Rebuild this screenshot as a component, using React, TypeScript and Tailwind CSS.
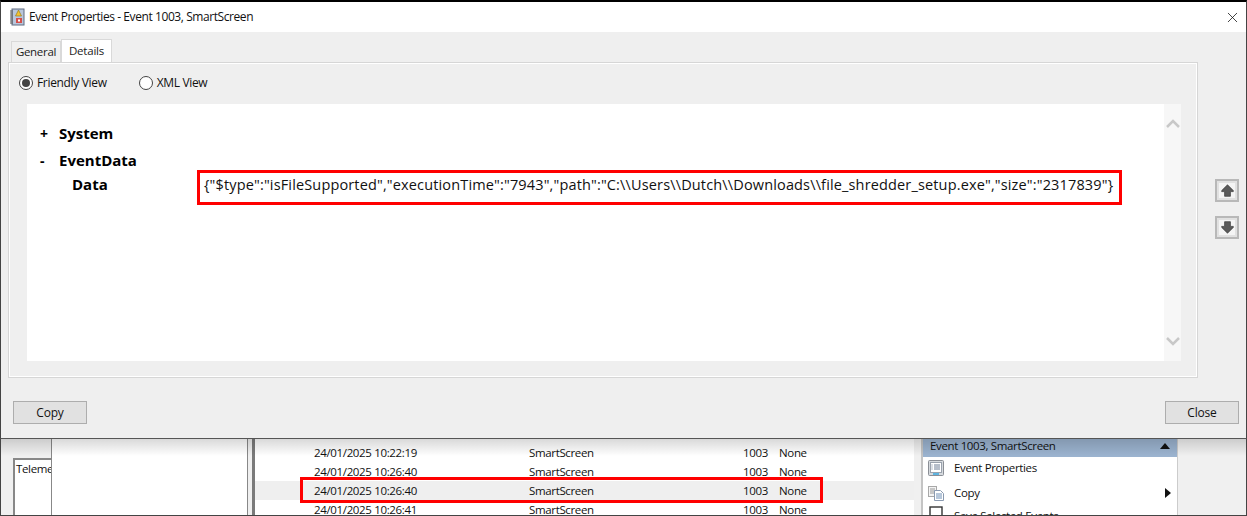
import { X } from 'lucide-react';

const font = { fontFamily: '"Open Sans", "Noto Sans", sans-serif' };

const rows = [
  { time: '24/01/2025 10:22:19', selected: false },
  { time: '24/01/2025 10:26:40', selected: false },
  { time: '24/01/2025 10:26:40', selected: true },
  { time: '24/01/2025 10:26:41', selected: false },
];

function Radio({ on, label }: { on?: boolean; label: string }) {
  return (
    <div className="flex items-center gap-[4px] text-[12px] tracking-[-0.33px] text-[#111]">
      <span className="w-[14px] h-[14px] rounded-full border border-[#444] bg-white flex items-center justify-center">
        {on && <span className="w-[8px] h-[8px] rounded-full bg-[#444]" />}
      </span>
      {label}
    </div>
  );
}

function ArrowButton({ up }: { up?: boolean }) {
  return (
    <div className="w-[24px] h-[23px] border-2 border-[#b8b8b8] bg-[#e1e1e1] flex items-center justify-center">
      <div className="w-[16px] h-[15px] bg-[#f4f4f4] flex items-center justify-center">
        <svg width="13" height="13" viewBox="0 0 13 13" className={up ? '' : 'rotate-180'}>
          <path d="M6.5 0.8 L12.3 6.6 V7.6 H9.4 V12.3 H3.6 V7.6 H0.7 V6.6 Z" fill="#5a5a5a" stroke="#3a3a3a" strokeWidth="0.7" />
        </svg>
      </div>
    </div>
  );
}

function EventLogIcon() {
  return (
    <svg width="16" height="18" viewBox="0 0 16 18">
      <rect x="3" y="1" width="12" height="16" fill="#b9c6dc" stroke="#5f6b80" />
      <path d="M1 3h3M1 5h3M1 7h3M1 9h3M1 11h3M1 13h3M1 15h3" stroke="#555" />
      <path d="M9.5 2 L12.5 8 H6.5 Z" fill="#f2c230" stroke="#8f7410" strokeWidth="0.6" />
      <rect x="7" y="10" width="6" height="5" fill="#d4504a" />
      <rect x="9" y="11.5" width="2" height="2" fill="#fff" />
    </svg>
  );
}

export default function App() {
  return (
    <div className="w-[1247px] h-[516px] overflow-hidden flex flex-col bg-white" style={font}>
      {/* dialog */}
      <div className="h-[439px] shrink-0 flex flex-col border-t-2 border-t-black border-x border-x-[#444] border-b border-b-[#555] bg-[#efefef]">
        <div className="h-[30px] shrink-0 bg-white flex items-center pl-[8px] pr-[5px] gap-[4px]">
          <EventLogIcon />
          <span className="text-[12px] text-[#111] tracking-[-0.42px]">Event Properties - Event 1003, SmartScreen</span>
          <X className="ml-auto" size={17} strokeWidth={1.1} color="#111" />
        </div>

        <div className="flex-1 flex flex-col pl-[7px] pr-[48px] pt-[8px]">
          <div className="flex items-end h-[22px] pl-[3px] shrink-0">
            <div className="h-[21px] w-[50px] border border-[#d9d9d9] border-b-0 bg-[#f0f0f0] flex items-center justify-center text-[11.5px] text-[#222] tracking-[-0.3px]">General</div>
            <div className="h-[23px] w-[51px] border border-[#d9d9d9] border-b-0 bg-white flex items-start pt-[2px] justify-center text-[11.5px] text-[#222] tracking-[-0.2px]">Details</div>
          </div>

          <div className="h-[316px] border border-[#d6d6d6] shadow-[inset_0_0_0_1px_#ffffff] bg-[#efefef] flex flex-col pl-[10px] pr-[16px] shrink-0">
            <div className="h-[41px] flex items-center gap-[32px] shrink-0 pb-[1px]">
              <Radio on label="Friendly View" />
              <Radio label="XML View" />
            </div>
            <div className="h-[257px] ml-[8px] bg-white flex">
              <div className="flex-1 pl-[13px] pt-[19px] text-[15px] font-bold text-black">
                <div className="flex h-[21px] items-center">
                  <span className="w-[19px] text-[14px]">+</span>System
                </div>
                <div className="flex h-[21px] items-center mt-[6px]">
                  <span className="w-[19px] text-[14px]">-</span>EventData
                </div>
                <div className="flex items-center -mt-[1px] pl-[32px]">
                  <span className="w-[125px] -mt-[7px]">Data</span>
                  <div className="w-[925px] h-[35px] border-[3px] border-[#ff0000] flex items-center pl-[4px] pb-[5px] font-normal text-[14.5px] tracking-[0.15px] whitespace-nowrap text-[#111]">
                    {'{"$type":"isFileSupported","executionTime":"7943","path":"C:\\\\Users\\\\Dutch\\\\Downloads\\\\file_shredder_setup.exe","size":"2317839"}'}
                  </div>
                </div>
              </div>
              <div className="w-[17px] bg-[#f7f7f7] flex flex-col justify-between items-center py-[15px]">
                <svg width="14" height="9" viewBox="0 0 14 9"><path d="M1 8 L7 2 L13 8" fill="none" stroke="#c8c8c8" strokeWidth="2.5" /></svg>
                <svg width="14" height="9" viewBox="0 0 14 9"><path d="M1 1 L7 7 L13 1" fill="none" stroke="#c8c8c8" strokeWidth="2.5" /></svg>
              </div>
            </div>
          </div>

          <div className="flex-1 relative">
            <div className="absolute -right-[41px] -top-[199px] flex flex-col gap-[14px]">
              <ArrowButton up />
              <ArrowButton />
            </div>
          </div>
          <div className="h-[37px] flex justify-between -mr-[41px] pl-[5px] shrink-0">
            <div className="w-[74px] h-[23px] border border-[#adadad] bg-[#e1e1e1] flex items-center justify-center text-[12px] tracking-[-0.2px] text-[#111]">Copy</div>
            <div className="w-[74px] h-[23px] border border-[#adadad] bg-[#e1e1e1] flex items-center justify-center text-[12px] tracking-[-0.2px] text-[#111]">Close</div>
          </div>
        </div>
      </div>

      {/* event viewer behind the dialog */}
      <div className="flex-1 flex relative border-b border-b-[#444] border-x border-x-[#444] text-[11.5px] tracking-[-0.35px] text-[#111] bg-[#f0f0f0] overflow-hidden">
        <div className="w-[50px] shrink-0 pt-[19px] pl-[12px]">
          <div className="h-[60px] border-2 border-[#888] border-r-0 bg-white pl-[1px] overflow-hidden whitespace-nowrap">Teleme</div>
        </div>
        <div className="w-[197px] shrink-0 bg-white border-x border-[#888]" />
        <div className="w-[7px] shrink-0 bg-[#efefef] border-r-[3px] border-[#7a7a7a]" />
        <div className="w-[659px] shrink-0 bg-white pt-[4px]">
          {rows.map((row, i) => (
            <div key={i} className={`h-[19px] flex items-center ${row.selected ? 'bg-[#efefef]' : ''}`}>
              <span className="w-[274px] pl-[59px]">{row.time}</span>
              <span className="w-[214px]">SmartScreen</span>
              <span className="w-[36px]">1003</span>
              <span>None</span>
            </div>
          ))}
        </div>
        <div className="w-[9px] shrink-0 bg-[#f0f0f0] border-r-2 border-[#c4c4c4]" />
        <div className="w-[255px] shrink-0 bg-white border-r border-[#ccc]">
          <div className="h-[18px] bg-[#9bb3cf] flex items-center justify-between pl-[7px] pr-[7px] pb-[5px]">
            Event 1003, SmartScreen
            <svg width="10" height="6" viewBox="0 0 10 6"><path d="M5 0 L10 6 H0 Z" fill="#111" /></svg>
          </div>
          <div className="h-[24px] flex items-center pl-[5px] gap-[10px] pb-[2px]">
            <svg width="16" height="16" viewBox="0 0 16 16"><rect x="0.5" y="0.5" width="15" height="15" rx="1" fill="#d6dade" stroke="#8b8f96" /><rect x="2.5" y="2.5" width="11" height="10" fill="#fff" stroke="#9aa2ad" /><path d="M6 5h6M6 7h6M6 9h6" stroke="#6f7f96" /><path d="M3.5 5h1M3.5 7h1M3.5 9h1" stroke="#6f7f96" /><path d="M5 14h6" stroke="#35a7e0" strokeWidth="1.5" /></svg>
            Event Properties
          </div>
          <div className="h-[24px] flex items-center pl-[5px] gap-[10px]">
            <svg width="16" height="16" viewBox="0 0 16 16"><rect x="0.5" y="1.5" width="8" height="10" fill="#f3f3f3" stroke="#a8a8a8" /><path d="M2 4h5M2 6h5M2 8h5" stroke="#9a9a9a" /><path d="M6.5 5.5h6l3 3v7h-9z" fill="#fff" stroke="#8a9ab0" /><path d="M8 9h6M8 11h6M8 13h6" stroke="#6f8fb5" /></svg>
            Copy
            <svg className="ml-auto mr-[6px]" width="6" height="10" viewBox="0 0 6 10"><path d="M0 0 L6 5 L0 10 Z" fill="#111" /></svg>
          </div>
          <div className="h-[16px] flex items-start pl-[5px] gap-[10px] pt-[1px]">
            <svg width="16" height="15" viewBox="0 0 16 15"><rect x="2" y="1" width="12" height="13" fill="#fff" stroke="#333" strokeWidth="1.4" /></svg>
            <span className="mt-[1px]">Save Selected Events...</span>
          </div>
        </div>
        <div className="flex-1 bg-[#f0f0f0]" />

        {/* shadow the dialog throws on what is behind it */}
        <div className="absolute inset-x-0 top-0 h-[17px] bg-gradient-to-b from-black/15 to-transparent" />
        {/* highlight over the selected row */}
        <div className="absolute left-[299px] top-[38px] w-[523px] h-[26px] border-[3px] border-[#ff0000]" />
      </div>
    </div>
  );
}
